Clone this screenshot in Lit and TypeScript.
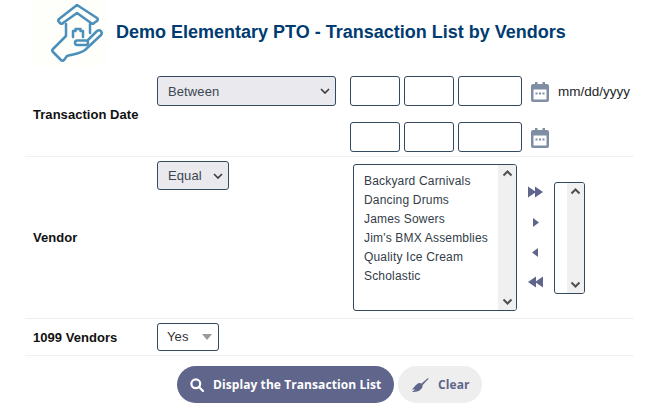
import { LitElement, html, css, svg } from "lit";
import { customElement } from "lit/decorators.js";

const chevron = (up: boolean) => svg`<svg class="chev" width="11" height="7" viewBox="0 0 11 7"><path d="${up ? "M1.5 5.5 5.5 1.5 9.5 5.5" : "M1.5 1.5 5.5 5.5 9.5 1.5"}" fill="none" stroke="#505050" stroke-width="2"/></svg>`;
const selChev = svg`<svg width="10" height="6" viewBox="0 0 10 6"><path d="M1 1 5 5 9 1" fill="none" stroke="#343a40" stroke-width="1.6"/></svg>`;
const cal = html`<svg class="cal" width="18" height="20" viewBox="0 0 18 20"><path d="M4 0h2.500v3H4zM11.500 0H14v3h-2.500z" fill="#7f8ea3"/><path fill-rule="evenodd" d="M2 2h14a2 2 0 0 1 2 2v14a2 2 0 0 1-2 2H2a2 2 0 0 1-2-2V4a2 2 0 0 1 2-2zM2.500 7.500v10h13v-10z" fill="#7f8ea3"/><path d="M4.500 10.500h2v2h-2zM8 10.500h2v2H8zM11.500 10.500h2v2h-2z" fill="#7f8ea3"/></svg>`;
const dateInputs = html`<div class="box w50"></div><div class="box w50"></div><div class="box w64"></div>`;

@customElement("app-root")
export class AppRoot extends LitElement {
  static styles = css`
    :host { display: block; width: 653px; height: 408px; overflow: hidden; background: #fff; font-family: "Liberation Sans", Arial, sans-serif; color: #212529; }
    .header { display: flex; align-items: center; height: 66px; }
    .logo { margin-left: 33px; flex: none; background: #fefefb; }
    h1 { margin: 0 0 0 10px; padding-bottom: 2px; font-size: 18px; line-height: 22px; font-weight: 700; color: #003b71; white-space: nowrap; }
    .table { margin: 0 19px 0 25px; }
    .row { display: grid; grid-template-columns: 124px 1fr; padding-left: 8px; border-bottom: 1px solid #f0f0f0; }
    .label { align-self: center; font-size: 13px; font-weight: 700; color: #111; letter-spacing: 0.04px; }
    .date { height: 90px; }
    .date .label { padding-top: 6px; }
    .vendor { height: 161px; }
    .yes { height: 36px; align-items: center; }
    .controls { display: flex; }
    .date .controls { padding-top: 10px; }
    .select { box-sizing: border-box; display: flex; align-items: center; justify-content: space-between; border: 1px solid #34495e; border-radius: 3px; background: #e9e9ee; font-size: 13px; color: #3c4650; padding: 0 5px 0 10px; flex: none; letter-spacing: 0.1px; }
    .between { width: 179px; height: 30px; }
    .equal { width: 72px; height: 29px; margin-top: 4px; }
    .yesno { width: 62px; height: 28px; background: #fff; padding: 0 6px 0 9px; margin-top: -1px; color: #333; }
    .tri { width: 0; height: 0; border-left: 5px solid transparent; border-right: 5px solid transparent; border-top: 6px solid #999; }
    .dates { margin-left: 14px; display: grid; grid-template-columns: 50px 50px 64px auto auto; grid-auto-rows: 30px; align-content: start; column-gap: 4px; row-gap: 16px; align-items: center; justify-items: start; }
    .box { box-sizing: border-box; height: 30px; border: 1px solid #34495e; border-radius: 3px; background: #fff; }
    .w50 { width: 50px; }
    .w64 { width: 64px; }
    .cal { margin: 2px 0 0 5px; }
    .fmt { font-size: 13.5px; margin: 0 0 0 5px; color: #212529; white-space: nowrap; }
    .list { box-sizing: border-box; display: flex; border: 1px solid #34495e; border-radius: 3px; background: #fff; flex: none; }
    .list1 { width: 164px; height: 147px; margin: 7px 0 0 124px; }
    .items { flex: 1; padding: 7px 0 0 10px; font-size: 12px; line-height: 19px; color: #333c48; letter-spacing: 0.18px; white-space: nowrap; }
    .bar { width: 18px; background: #f0f0f0; display: flex; flex-direction: column; justify-content: space-between; align-items: center; padding: 5px 0; box-sizing: border-box; border-radius: 0 2px 2px 0; }
    .movers { width: 37px; margin-top: 7px; display: flex; flex-direction: column; align-items: flex-start; padding: 13px 0 0 11px; box-sizing: border-box; gap: 0; flex: none; }
    .mv { height: 30px; display: flex; align-items: center; }
    .list2 { width: 31px; height: 112px; margin-top: 25px; justify-content: flex-end; }
    .list2 .bar { width: 17px; }
    .actions { display: flex; gap: 4px; margin: 10px 0 0 177px; }
    .btn { box-sizing: border-box; display: flex; align-items: center; height: 37px; border-radius: 19px; font-family: "Open Sans", sans-serif; font-size: 12px; font-weight: 700; white-space: nowrap; letter-spacing: 0.08px; }
    .primary { width: 217px; background: #5f658b; color: #fff; padding-left: 13px; gap: 9px; }
    .clear { width: 84px; background: #eeeeee; color: #5f658b; padding-left: 13px; gap: 9px; }
  `;

  render() {
    const arrow = "#5f658b";
    return html`
      <div class="header">
        <svg class="logo" width="73" height="66" viewBox="33 0 73 66" fill="none" stroke="#4a90bb" stroke-width="2.500" stroke-linejoin="round" stroke-linecap="round">
          <path d="M77 5 59 19c-1 1-1 2 0 3l1 1c1 1 2 1 3 0l14-10 14 10c1 1 2 1 3 0l3-2c1-1 1-2 0-3z"/>
          <path d="M66 24v11M90 24v9"/>
          <path d="M73 37v-6h2.500v-2h5v2h2.500v6"/>
          <path d="M66 36 53 49c-1 1-1 2 0 3l8 8c1 1 2 1 3 0l3-4c6-2 13-2 18-6l16-15c2-3-1-6-4-4L88 40"/>
          <rect x="75" y="40.500" width="13" height="4.500" rx="2.200"/>
        </svg>
        <h1>Demo Elementary PTO - Transaction List by Vendors</h1>
      </div>
      <div class="table">
        <div class="row date">
          <div class="label">Transaction Date</div>
          <div class="controls">
            <div class="select between"><span>Between</span>${selChev}</div>
            <div class="dates">
              ${dateInputs}${cal}<span class="fmt">mm/dd/yyyy</span>
              ${dateInputs}${cal}
            </div>
          </div>
        </div>
        <div class="row vendor">
          <div class="label">Vendor</div>
          <div class="controls">
            <div class="select equal"><span>Equal</span>${selChev}</div>
            <div class="list list1">
              <div class="items">
                <div>Backyard Carnivals</div><div>Dancing Drums</div><div>James Sowers</div>
                <div>Jim's BMX Assemblies</div><div>Quality Ice Cream</div><div>Scholastic</div>
              </div>
              <div class="bar">${chevron(true)}${chevron(false)}</div>
            </div>
            <div class="movers">
              <div class="mv"><svg width="15" height="12" viewBox="0 0 15 11" fill="${arrow}"><path d="M0 0l8 5.500L0 11zM7 0l8 5.500L7 11z"/></svg></div>
              <div class="mv"><svg width="15" height="11" viewBox="0 0 15 11" fill="${arrow}"><path d="M5 1l6 4.500L5 10z"/></svg></div>
              <div class="mv"><svg width="15" height="11" viewBox="0 0 15 11" fill="${arrow}"><path d="M10 1 4 5.500 10 10z"/></svg></div>
              <div class="mv"><svg width="15" height="12" viewBox="0 0 15 11" fill="${arrow}"><path d="M8 0 0 5.500 8 11zM15 0 7 5.500l8 5.500z"/></svg></div>
            </div>
            <div class="list list2"><div class="bar">${chevron(true)}${chevron(false)}</div></div>
          </div>
        </div>
        <div class="row yes">
          <div class="label">1099 Vendors</div>
          <div class="controls">
            <div class="select yesno"><span>Yes</span><i class="tri"></i></div>
          </div>
        </div>
      </div>
      <div class="actions">
        <div class="btn primary">
          <svg width="14" height="14" viewBox="0 0 14 14" fill="none" stroke="#fff" stroke-width="2.200"><circle cx="5.800" cy="5.800" r="4.400"/><path d="M9 9l4 4" stroke-linecap="round"/></svg>
          <span>Display the Transaction List</span>
        </div>
        <div class="btn clear">
          <svg width="18" height="16" viewBox="0 0 18 16" fill="#5f658b"><path d="M10 7 17 1l.6.8-6.400 6.600z"/><path d="M8 6c2 0 4 1.500 3.500 3.500C11 12 8 15 2 15l-1-.5c2-.5 2.500-1.500 2.800-2.500-1 .5-2 .7-3 .5C3 11 5 7 8 6z"/></svg>
          <span>Clear</span>
        </div>
      </div>
    `;
  }
}
